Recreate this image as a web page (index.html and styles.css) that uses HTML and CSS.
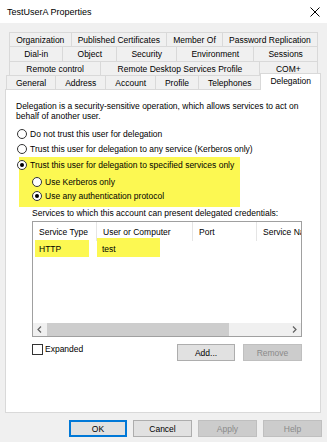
FILE: index.html
```html
<!DOCTYPE html>
<html>
<head>
<meta charset="utf-8">
<link rel="stylesheet" href="styles.css">
</head>
<body>
<div class="titlebar">
  <span class="title">TestUserA Properties</span>
  <svg class="close" width="10" height="10" viewBox="0 0 10 10"><path d="M0.5 0.5 L9.5 9.5 M9.5 0.5 L0.5 9.5" stroke="#000" stroke-width="1" fill="none"/></svg>
</div>
<div class="tabs">
  <div class="tabrow">
    <div class="tab">Organization</div>
    <div class="tab">Published Certificates</div>
    <div class="tab">Member Of</div>
    <div class="tab">Password Replication</div>
  </div>
  <div class="tabrow r2">
    <div class="tab">Dial-in</div>
    <div class="tab">Object</div>
    <div class="tab">Security</div>
    <div class="tab">Environment</div>
    <div class="tab">Sessions</div>
  </div>
  <div class="tabrow">
    <div class="tab">Remote control</div>
    <div class="tab">Remote Desktop Services Profile</div>
    <div class="tab">COM+</div>
  </div>
  <div class="tabrow r4">
    <div class="tab">General</div>
    <div class="tab">Address</div>
    <div class="tab">Account</div>
    <div class="tab">Profile</div>
    <div class="tab">Telephones</div>
    <div class="tab sel">Delegation</div>
  </div>
</div>
<div class="panel">
  <p class="desc">Delegation is a security-sensitive operation, which allows services to act on behalf of another user.</p>
  <div class="opt first"><span class="radio"></span><span>Do not trust this user for delegation</span></div>
  <div class="opt second"><span class="radio"></span><span>Trust this user for delegation to any service (Kerberos only)</span></div>
  <div class="hl-block">
    <div class="opt main"><span class="radio on"></span><span>Trust this user for delegation to specified services only</span></div>
    <div class="opt sub s1"><span class="radio"></span><span>Use Kerberos only</span></div>
    <div class="opt sub s2"><span class="radio on"></span><span>Use any authentication protocol</span></div>
  </div>
  <div class="svc-label">Services to which this account can present delegated credentials:</div>
  <div class="list">
    <div class="lhead">
      <div class="col c1">Service Type</div>
      <div class="col c2">User or Computer</div>
      <div class="col c3">Port</div>
      <div class="col c4">Service Name</div>
    </div>
    <div class="lrow">
      <div class="cell c1"><span class="hl http">HTTP</span></div>
      <div class="cell c2"><span class="hl test">test</span></div>
    </div>
    <div class="lspace"></div>
    <div class="hscroll">
      <div class="arrow"><svg width="6" height="7" viewBox="0 0 6 7"><path d="M4 0.5 L1 3.5 L4 6.5" stroke="#606060" stroke-width="1.2" fill="none"/></svg></div>
      <div class="thumb"></div>
      <div class="track"></div>
      <div class="arrow"><svg width="6" height="7" viewBox="0 0 6 7"><path d="M2 0.5 L5 3.5 L2 6.5" stroke="#606060" stroke-width="1.2" fill="none"/></svg></div>
    </div>
  </div>
  <div class="actions">
    <span class="check"></span><span class="check-label">Expanded</span>
    <button class="btn add">Add...</button>
    <button class="btn dis">Remove</button>
  </div>
</div>
<div class="footer">
  <button class="btn ok">OK</button>
  <button class="btn">Cancel</button>
  <button class="btn dis">Apply</button>
  <button class="btn dis">Help</button>
</div>
</body>
</html>
```
FILE: styles.css
```css
* { box-sizing: border-box; }
body {
  margin: 0;
  width: 327px;
  height: 442px;
  overflow: hidden;
  background: #f0f0f0;
  font-family: "Liberation Sans", Arial, sans-serif;
  font-size: 8.5px;
  color: #000;
}
.titlebar {
  height: 23px;
  background: #fff;
  display: flex;
  align-items: center;
  justify-content: space-between;
  padding: 0 7px 0 7px;
}
.title { font-size: 9px; }
.close { margin-top: 1px; }

.tabs { margin-top: 9px; display: flex; flex-direction: column; }
.tabrow { display: flex; height: 14px; margin: 0 9px; }
.tabrow.r2 { height: 15px; }
.tabrow.r4 { margin: 0 6px; align-items: flex-end; }
.tab {
  flex: 1 1 auto;
  height: 100%;
  border: 1px solid #d9d9d9;
  border-bottom: none;
  margin-left: -1px;
  padding: 0 3px;
  display: flex;
  align-items: center;
  justify-content: center;
  white-space: nowrap;
  background: #f0f0f0;
}
.tab:first-child { margin-left: 0; }
.tab.sel {
  background: #fff;
  height: 17px;
  margin-bottom: -1px;
  position: relative;
  z-index: 1;
  align-items: flex-start;
  padding-top: 2px;
}

.panel {
  margin: 0 6px 0 5px;
  height: 324px;
  border: 1px solid #d9d9d9;
  background: #fff;
  padding: 0 10px;
}
.desc { margin: 11px 0 0 0; line-height: 10px; }

.opt { display: flex; align-items: center; height: 12px; gap: 3px; white-space: nowrap; }
.opt.first { margin-top: 7px; margin-left: 1px; }
.opt.second { margin-top: 3px; margin-left: 1px; }
.radio {
  width: 10px;
  height: 10px;
  border: 1px solid #333;
  border-radius: 50%;
  background: #fff;
  display: flex;
  align-items: center;
  justify-content: center;
  flex: none;
}
.radio.on::after {
  content: "";
  width: 4px;
  height: 4px;
  border-radius: 50%;
  background: #000;
}
.hl-block {
  margin: 2px 0 0 3px;
  width: 221px;
  height: 50px;
  background: #fcf852;
  padding-top: 2px;
}
.opt.main { margin-left: -2px; }
.opt.sub { margin-left: 13px; }
.opt.s1 { margin-top: 5px; }
.opt.s2 { margin-top: 2px; }

.svc-label { margin: 1px 0 0 16px; line-height: 10px; white-space: nowrap; }

.list {
  margin: 3px 0 0 16px;
  width: 270px;
  height: 116px;
  border: 1px solid #a0a0a0;
  display: flex;
  flex-direction: column;
  overflow: hidden;
}
.lhead { display: flex; height: 19px; flex: none; }
.col {
  padding-left: 6px;
  display: flex;
  align-items: center;
  white-space: nowrap;
  border-right: 1px solid #e5e5e5;
  overflow: hidden;
  flex: none;
}
.c1 { width: 64px; }
.c2 { width: 96px; }
.c3 { width: 64px; }
.c4 { width: 60px; border-right: none; }
.lrow { display: flex; height: 17px; margin-top: -1px; flex: none; }
.cell { display: flex; align-items: stretch; flex: none; }
.hl { background: #fcf852; display: flex; align-items: center; }
.http { margin-left: 2px; width: 54px; padding-left: 4px; }
.test { width: 63px; padding-left: 5px; margin-top: -2px; height: 19px; padding-top: 2px; }
.lspace { flex: 1; }
.hscroll { height: 13px; display: flex; background: #f0f0f0; flex: none; }
.arrow { width: 14px; display: flex; align-items: center; justify-content: center; flex: none; }
.thumb { width: 182px; background: #cdcdcd; flex: none; }
.track { flex: 1; }

.actions { display: flex; align-items: flex-start; margin: 7px 8px 0 16px; }
.check { width: 11px; height: 11px; border: 1px solid #333; background: #fff; flex: none; }
.check-label { margin-left: 2px; line-height: 11px; }
.btn {
  font-family: "Liberation Sans", Arial, sans-serif;
  font-size: 8.5px;
  color: #000;
  width: 59px;
  height: 17px;
  padding: 0;
  background: #e1e1e1;
  border: 1px solid #adadad;
}
.btn.add { margin-left: auto; width: 58px; }
.actions .btn.dis { margin-left: 8px; }
.btn.dis { background: #cccccc; border-color: #bfbfbf; color: #8a8a8a; }
.btn.ok { border: 1px solid #0078d7; box-shadow: inset 0 0 0 1px #0078d7; width: 58px; }

.footer { display: flex; justify-content: flex-end; gap: 6px; margin-top: 7px; padding-right: 5px; }
```
